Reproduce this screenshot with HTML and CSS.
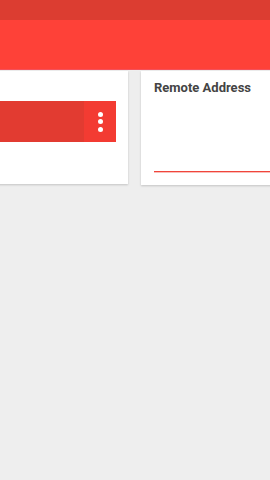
FILE: index.html
```html
<!DOCTYPE html>
<html>
<head>
<meta charset="utf-8">
<link rel="stylesheet" href="styles.css">
</head>
<body>
<div class="statusbar"></div>
<div class="toolbar"></div>
<div class="viewport">
  <div class="cards">
    <div class="card card-left">
      <div class="bar">
        <div class="bar-main"></div>
        <div class="bar-menu">
          <span class="dot"></span><span class="dot"></span><span class="dot"></span>
        </div>
      </div>
    </div>
    <div class="card card-right">
      <div class="title">Remote Address</div>
      <div class="spacer"></div>
      <div class="underline"></div>
    </div>
  </div>
</div>
</body>
</html>
```
FILE: styles.css
```css
html, body {
  margin: 0;
  padding: 0;
  width: 270px;
  height: 480px;
  overflow: hidden;
  background: #eeeeee;
  font-family: Roboto, "Liberation Sans", sans-serif;
}
.statusbar {
  height: 20px;
  background: #dc3d31;
}
.toolbar {
  height: 50px;
  background: #fe4138;
  border-bottom: 1px solid #f4505a;
  box-sizing: border-box;
}
.viewport {
  width: 270px;
  overflow: hidden;
  padding-bottom: 4px;
}
.cards {
  display: flex;
  gap: 13px;
  margin-left: -72px;
  margin-top: 1px;
}
.card {
  flex: 0 0 200px;
  height: 113px;
  background: #ffffff;
  box-shadow: 0 1px 2px rgba(0,0,0,0.18);
  box-sizing: border-box;
}
.card-left {
  padding: 30px 12px 0 0;
}
.bar {
  display: flex;
  height: 41px;
}
.bar-main {
  flex: 1;
  background: #e23b31;
}
.bar-menu {
  width: 32px;
  background: #f33b32;
  display: flex;
  flex-direction: column;
  align-items: center;
  justify-content: center;
  gap: 2.5px;
}
.dot {
  width: 5px;
  height: 5px;
  border-radius: 50%;
  background: #ffffff;
}
.card-right {
  height: 114px;
  padding: 9px 0 0 13px;
  display: flex;
  flex-direction: column;
}
.title {
  font-size: 13px;
  font-weight: 700;
  color: #444444;
  line-height: 16px;
}
.spacer {
  height: 75px;
  flex: 0 0 75px;
}
.underline {
  flex: 0 0 2px;
  height: 2px;
  background: linear-gradient(#f0453b 0 50%, rgba(240,69,59,0.35) 50% 100%);
}
```
